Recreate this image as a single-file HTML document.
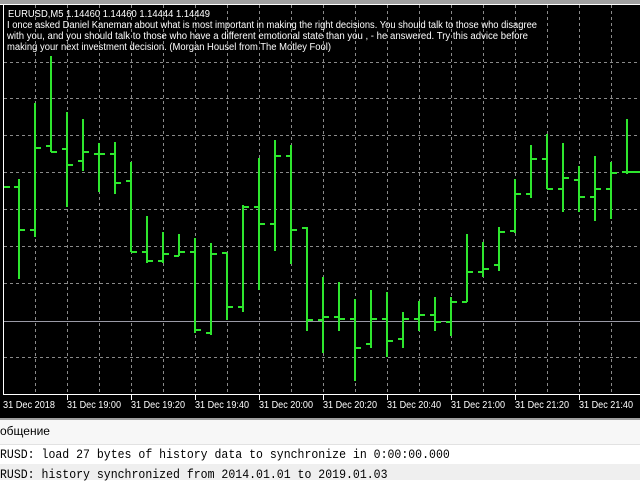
<!DOCTYPE html>
<html><head><meta charset="utf-8"><style>
html,body{margin:0;padding:0;width:640px;height:480px;overflow:hidden;background:#fff}
svg{position:absolute;left:0;top:0}
.log{position:absolute;left:0;font-family:"Liberation Mono",monospace;font-size:13px;color:#000;white-space:pre;line-height:20px;transform:scaleX(0.887);transform-origin:0 0}
</style></head><body>
<svg width="640" height="420" viewBox="0 0 640 420">
<rect x="0" y="0" width="640" height="420" fill="#000"/>
<rect x="0" y="0" width="640" height="4" fill="#a0a0a0"/>
<rect x="0" y="4" width="640" height="1" fill="#fff"/>
<rect x="3" y="5" width="1" height="390" fill="#fff"/>
<rect x="3" y="394" width="637" height="1" fill="#fff"/>
<g stroke="#8a8a8a" stroke-width="1" stroke-dasharray="3,3" fill="none">
<path d="M35.5,5V394M67.5,5V394M99.5,5V394M131.5,5V394M163.5,5V394M195.5,5V394M227.5,5V394M259.5,5V394M291.5,5V394M323.5,5V394M355.5,5V394M387.5,5V394M419.5,5V394M451.5,5V394M483.5,5V394M515.5,5V394M547.5,5V394M579.5,5V394M611.5,5V394"/>
<path d="M4,62.5H640M4,98.5H640M4,135.5H640M4,172.5H640M4,209.5H640M4,246.5H640M4,283.5H640M4,357.5H640"/>
</g>
<rect x="4" y="321" width="636" height="1" fill="#9a9aa6"/>
<g stroke="#fff" stroke-width="1">
<path d="M67.5,394V400M131.5,394V400M195.5,394V400M259.5,394V400M323.5,394V400M387.5,394V400M451.5,394V400M515.5,394V400M579.5,394V400"/>
</g>
<path stroke="#2ee62e" stroke-width="2" fill="none" d="
M4,187H10
M19,179V279M14,187H19M19,230H25
M35,103V237M30,230H35M35,148H41
M51,56V152M46,146H51M51,152H57
M67,112V207M62,149H67M67,165H73
M83,119V171M78,161H83M83,152H89
M99,143V192M94,154H99M99,154H105
M115,142V194M110,154H115M115,183H121
M131,162V252M126,181H131M131,252H137
M147,216V263M142,252H147M147,261H153
M163,232V263M158,261H163M163,254H169
M179,234V256M174,256H179M179,252H185
M195,238V333M190,252H195M195,330H201
M211,243V335M206,333H211M211,254H217
M227,253V320M222,253H227M227,307H233
M243,205V312M238,307H243M243,207H249
M259,158V290M254,207H259M259,224H265
M275,140V251M270,224H275M275,156H281
M291,145V264M286,156H291M291,230H297
M307,227V331M302,228H307M307,320H313
M323,277V353M318,320H323M323,317H329
M339,282V331M334,317H339M339,319H345
M355,299V381M350,319H355M355,348H361
M371,290V348M366,344H371M371,319H377
M387,292V357M382,319H387M387,341H393
M403,312V348M398,339H403M403,319H409
M419,301V331M414,319H419M419,315H425
M435,297V331M430,315H435M435,322H441
M451,297V336M446,322H451M451,302H457
M467,234V302M462,302H467M467,272H473
M483,242V277M478,272H483M483,269H489
M499,227V271M494,265H499M499,232H505
M515,179V233M510,231H515M515,194H521
M531,145V198M526,194H531M531,159H537
M547,134V189M542,159H547M547,189H553
M563,143V212M558,189H563M563,178H569
M579,166V212M574,180H579M579,197H585
M595,156V221M590,197H595M595,189H601
M611,162V219M606,189H611M611,173H617
M627,119V174M622,172H627M627,172H640
"/>
<g fill="#fff" font-family="Liberation Sans, sans-serif" font-size="10">
<text x="8" y="17" textLength="202" lengthAdjust="spacingAndGlyphs">EURUSD,M5  1.14460 1.14460 1.14444 1.14449</text>
<text x="7" y="28" textLength="530" lengthAdjust="spacingAndGlyphs">I once asked Daniel Kaneman about what is most important in making the right decisions. You should talk to those who disagree</text>
<text x="7" y="39" textLength="521" lengthAdjust="spacingAndGlyphs">with you, and you should talk to those who have a different emotional state than you , - he answered. Try this advice before</text>
<text x="7" y="50" textLength="324" lengthAdjust="spacingAndGlyphs">making your next investment decision. (Morgan Housel from The Motley Fool)</text>
<g>
<text x="3" y="408" textLength="52" lengthAdjust="spacingAndGlyphs">31 Dec 2018</text>
<text x="67" y="408" textLength="54" lengthAdjust="spacingAndGlyphs">31 Dec 19:00</text>
<text x="131" y="408" textLength="54" lengthAdjust="spacingAndGlyphs">31 Dec 19:20</text>
<text x="195" y="408" textLength="54" lengthAdjust="spacingAndGlyphs">31 Dec 19:40</text>
<text x="259" y="408" textLength="54" lengthAdjust="spacingAndGlyphs">31 Dec 20:00</text>
<text x="323" y="408" textLength="54" lengthAdjust="spacingAndGlyphs">31 Dec 20:20</text>
<text x="387" y="408" textLength="54" lengthAdjust="spacingAndGlyphs">31 Dec 20:40</text>
<text x="451" y="408" textLength="54" lengthAdjust="spacingAndGlyphs">31 Dec 21:00</text>
<text x="515" y="408" textLength="54" lengthAdjust="spacingAndGlyphs">31 Dec 21:20</text>
<text x="579" y="408" textLength="54" lengthAdjust="spacingAndGlyphs">31 Dec 21:40</text>
</g>
</g>
<rect x="0" y="418" width="640" height="2" fill="#a0a0a0"/>
</svg>
<div style="position:absolute;left:0;top:420px;width:640px;height:24px;background:#f7f7f7;border-bottom:1px solid #e2e2e2"></div>
<div style="position:absolute;left:0;top:424px;font-family:'Liberation Sans',sans-serif;font-size:12px;color:#000">общение</div>
<div style="position:absolute;left:0;top:445px;width:640px;height:19px;background:#fff"></div>
<div style="position:absolute;left:0;top:464px;width:640px;height:16px;background:#efefef"></div>
<div class="log" style="top:445px">RUSD: load 27 bytes of history data to synchronize in 0:00:00.000</div>
<div class="log" style="top:465px">RUSD: history synchronized from 2014.01.01 to 2019.01.03</div>
</body></html>
